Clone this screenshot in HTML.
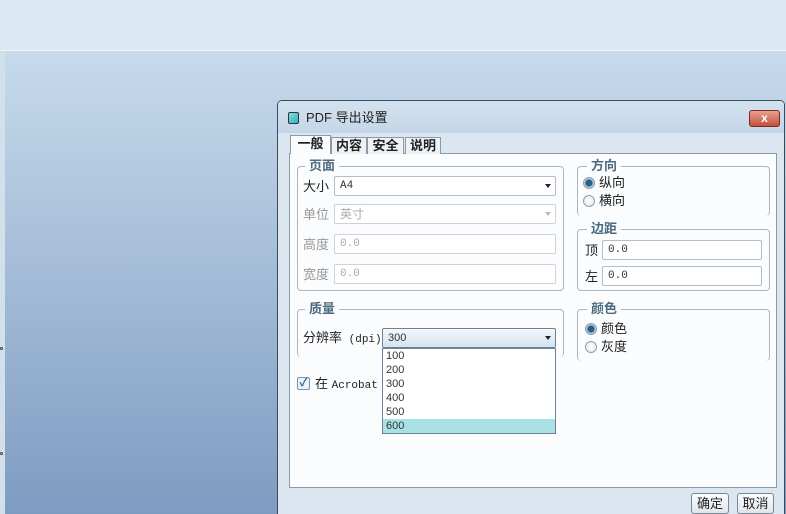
<!DOCTYPE html>
<html><head><meta charset="utf-8"><style>
*{margin:0;padding:0;box-sizing:border-box}
body{width:786px;height:514px;overflow:hidden;position:relative;font-family:"Liberation Sans","Noto Sans CJK SC",sans-serif;font-size:12px;color:#222;background:linear-gradient(#c6daeb 52px,#7e9bc1 514px)}
.a{position:absolute}
.top{left:0;top:0;width:786px;height:51px;background:#dde9f2;border-bottom:1px solid #eef4f8}
.strip{left:0;top:52px;width:5px;height:462px;background:#d2e0ec}
.dlg{left:277px;top:100px;width:508px;height:414px;background:#dbe6f0;border:1px solid #3c4a5a;border-radius:5px 5px 0 0;border-bottom:none}
.title{left:278px;top:101px;width:506px;height:32px;background:linear-gradient(#d4e2ef,#c4d6e8);border-radius:4px 4px 0 0}
.panel{left:289px;top:153px;width:488px;height:335px;background:#fafcfe;border:1px solid #8a9aa8}
.tab{top:137px;height:17px;border:1px solid #8a9aa8;border-bottom:none;background:#eef2f6;font-weight:bold;font-size:13px;line-height:15px;text-align:center}
.grp{border:1px solid #a9b6c2;border-radius:4px}
.gl{font-weight:bold;font-size:13px;color:#4c6a80;background:#fafcfe;padding:0 4px;line-height:14px}
.lbl{font-size:13px;line-height:14px}
.dis{color:#999}
.fld{height:20px;border:1px solid #b4bec8;border-radius:2px;background:#fff;font-family:"Liberation Mono","Noto Sans CJK SC",monospace;font-size:11px;line-height:18px;padding-left:5px;color:#333}
.fld.d{color:#aaa;border-color:#ccd3da}
.arr{position:absolute;right:4px;top:7px;width:0;height:0;border-left:3px solid transparent;border-right:3px solid transparent;border-top:4px solid #222}
.rad{width:12px;height:12px;border-radius:50%;border:1px solid #8ca0b0;background:radial-gradient(#fff,#dde6ee)}
.rad.on{background:radial-gradient(#2c5f86 3px,#9fc2da 4px,#e6eef5 6px)}
.btn{top:493px;height:21px;border:1px solid #7a8896;border-radius:3px;background:linear-gradient(#fbfcfd,#dfe6ec);font-size:13px;line-height:19px;text-align:center}
</style></head><body>
<div class="a top"></div>
<div class="a strip"></div>
<div class="a" style="left:0;top:347px;width:3px;height:3px;border:1px solid #444;border-radius:50%"></div>
<div class="a" style="left:0;top:452px;width:3px;height:3px;border:1px solid #444;border-radius:50%"></div>
<div class="a dlg"></div>
<div class="a title"></div>
<div class="a" style="left:288px;top:112px;width:11px;height:12px;border:1px solid #333;border-radius:2px;background:linear-gradient(135deg,#7fe0e0,#36b0b8)"></div>
<div class="a" style="left:306px;top:110px;font-size:13px;line-height:16px">PDF 导出设置</div>
<div class="a" style="left:749px;top:110px;width:31px;height:17px;border:1px solid #7a2c22;border-radius:3px;background:linear-gradient(#e9a090,#c4503c);color:#fff;font-weight:bold;text-align:center;line-height:14px;font-size:12px">x</div>
<div class="a panel"></div>
<div class="a tab" style="left:290px;width:41px;top:135px;height:19px;background:#fafcfe">一般</div>
<div class="a tab" style="left:331px;width:36px">内容</div>
<div class="a tab" style="left:367px;width:37px">安全</div>
<div class="a tab" style="left:405px;width:36px">说明</div>

<div class="a grp" style="left:297px;top:166px;width:267px;height:125px"></div>
<div class="a gl" style="left:305px;top:159px">页面</div>
<div class="a lbl" style="left:303px;top:180px">大小</div>
<div class="a fld" style="left:334px;top:176px;width:222px">A4<div class="arr"></div></div>
<div class="a lbl dis" style="left:303px;top:208px">单位</div>
<div class="a fld d" style="left:334px;top:204px;width:222px;font-family:'Liberation Sans','Noto Sans CJK SC',sans-serif;font-size:12px">英寸<div class="arr" style="border-top-color:#bbb"></div></div>
<div class="a lbl dis" style="left:303px;top:238px">高度</div>
<div class="a fld d" style="left:334px;top:234px;width:222px">0.0</div>
<div class="a lbl dis" style="left:303px;top:268px">宽度</div>
<div class="a fld d" style="left:334px;top:264px;width:222px">0.0</div>

<div class="a grp" style="left:297px;top:309px;width:267px;height:48px;border-bottom:none"></div>
<div class="a gl" style="left:305px;top:302px">质量</div>
<div class="a lbl" style="left:303px;top:331px">分辨率<span style="font-family:'Liberation Mono',monospace;font-size:11px"> (dpi)</span></div>
<div class="a fld" style="left:382px;top:328px;width:174px;height:20px;border-color:#6e8296;background:linear-gradient(#f4f8fb,#d4e4f0);font-family:'Liberation Sans',sans-serif">300<div class="arr"></div></div>
<div class="a" style="left:382px;top:348px;width:174px;height:86px;background:#fff;border:1px solid #6e8296;font-size:11px;line-height:14px;color:#333">
<div style="padding-left:3px">100</div><div style="padding-left:3px">200</div><div style="padding-left:3px">300</div><div style="padding-left:3px">400</div><div style="padding-left:3px">500</div><div style="padding-left:3px;background:#a9e0e6">600</div></div>
<div class="a" style="left:297px;top:377px;width:13px;height:13px;border:1px solid #7d95aa;border-radius:2px;background:#eaf2f9;color:#2a5c8a;font-size:11px;line-height:11px;text-align:center;font-weight:bold">✓</div>
<div class="a lbl" style="left:315px;top:377px">在 <span style="font-family:'Liberation Mono',monospace;font-size:11px">Acrobat</span></div>

<div class="a grp" style="left:577px;top:166px;width:193px;height:50px;border-bottom:none"></div>
<div class="a gl" style="left:587px;top:159px">方向</div>
<div class="a rad on" style="left:583px;top:177px"></div><div class="a lbl" style="left:599px;top:176px">纵向</div>
<div class="a rad" style="left:583px;top:195px"></div><div class="a lbl" style="left:599px;top:194px">横向</div>

<div class="a grp" style="left:577px;top:229px;width:193px;height:62px"></div>
<div class="a gl" style="left:587px;top:222px">边距</div>
<div class="a lbl" style="left:585px;top:244px">顶</div>
<div class="a fld" style="left:602px;top:240px;width:160px">0.0</div>
<div class="a lbl" style="left:585px;top:270px">左</div>
<div class="a fld" style="left:602px;top:266px;width:160px">0.0</div>

<div class="a grp" style="left:577px;top:309px;width:193px;height:52px;border-bottom:none"></div>
<div class="a gl" style="left:587px;top:302px">颜色</div>
<div class="a rad on" style="left:585px;top:323px"></div><div class="a lbl" style="left:601px;top:322px">颜色</div>
<div class="a rad" style="left:585px;top:341px"></div><div class="a lbl" style="left:601px;top:340px">灰度</div>

<div class="a btn" style="left:691px;width:38px">确定</div>
<div class="a btn" style="left:737px;width:37px">取消</div>
</body></html>
